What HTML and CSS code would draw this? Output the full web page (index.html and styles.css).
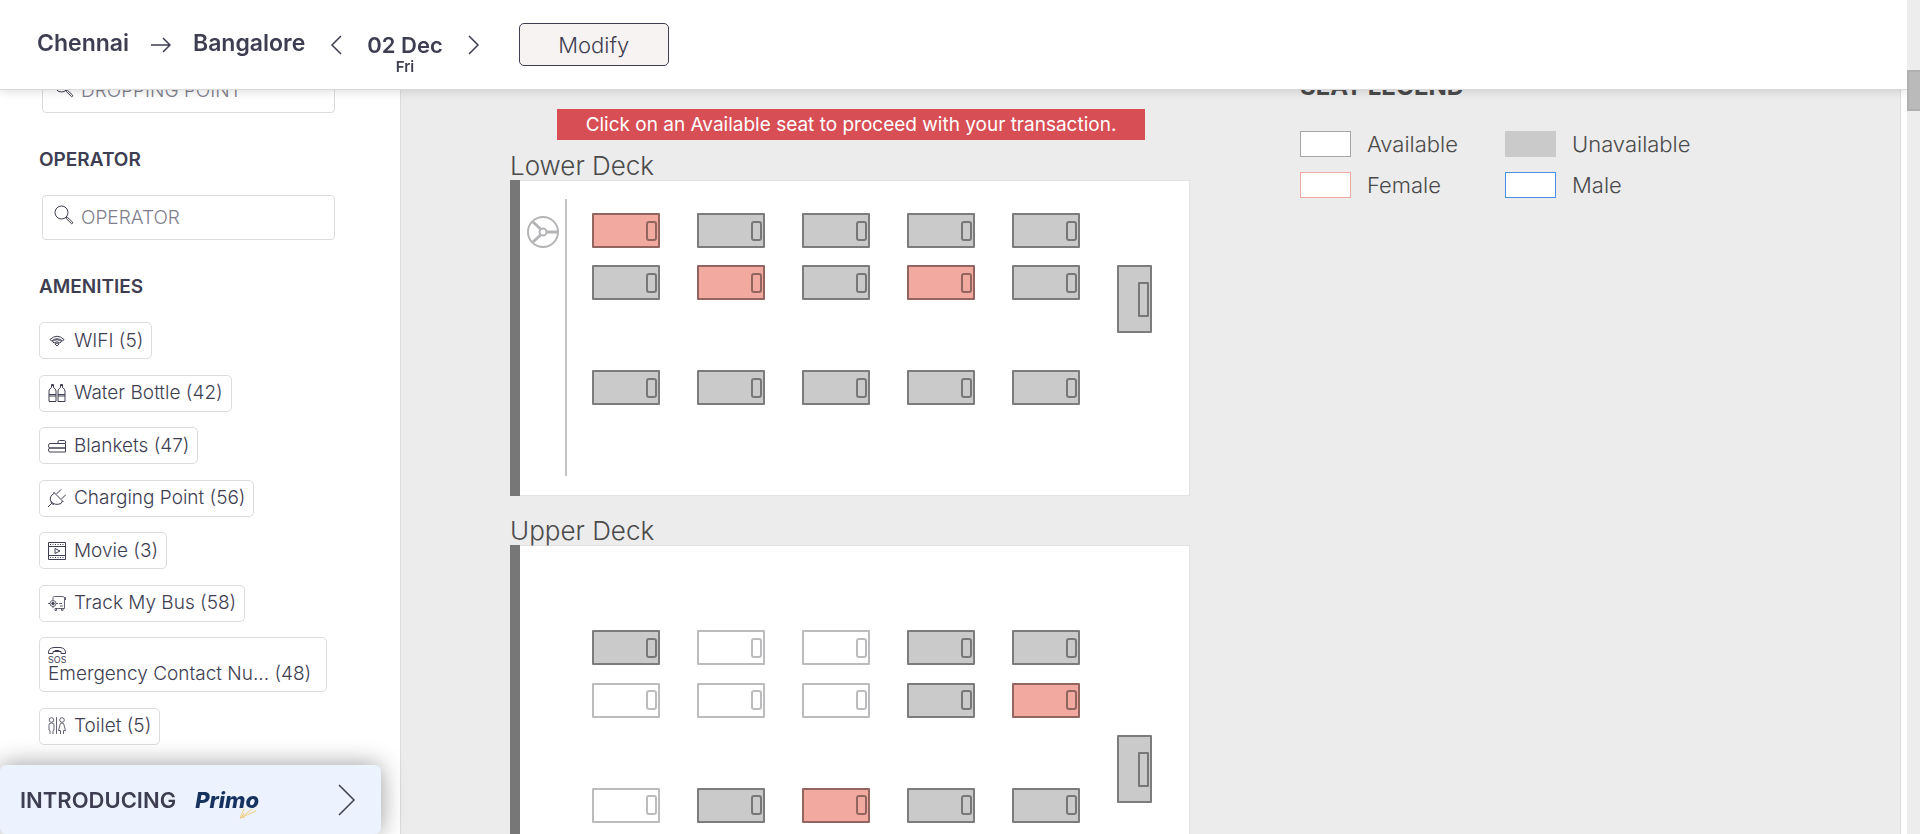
FILE: index.html
```html
<!DOCTYPE html>
<html lang="en">
<head>
<meta charset="utf-8">
<title>Chennai to Bangalore bus seats</title>
<link rel="stylesheet" href="styles.css">
</head>
<body>
<header class="topbar">
  <span class="city">Chennai</span>
  <svg class="route-arrow" viewBox="0 0 20 16" aria-hidden="true"><path d="M0 8H19M12 1L19 8L12 15"/></svg>
  <span class="city">Bangalore</span>
  <button class="day-step" aria-label="Previous day"><svg viewBox="0 0 12 20"><path d="M11 1L2 10L11 19"/></svg></button>
  <div class="date"><span class="date-day">02 Dec</span><span class="date-week">Fri</span></div>
  <button class="day-step" aria-label="Next day"><svg viewBox="0 0 12 20"><path d="M1 1L10 10L1 19"/></svg></button>
  <button class="modify">Modify</button>
</header>

<div class="page">
  <aside class="filters">
    <label class="search">
      <svg viewBox="0 0 20 20" aria-hidden="true"><circle cx="7.500" cy="7.500" r="6.500"/><path d="M12 13.200L13.200 12L18.600 17.200Q19 18.600 17.600 18.700Z"/></svg>
      <input type="text" placeholder="DROPPING POINT" aria-label="Dropping point">
    </label>
    <h2 class="filter-title">OPERATOR</h2>
    <label class="search">
      <svg viewBox="0 0 20 20" aria-hidden="true"><circle cx="7.500" cy="7.500" r="6.500"/><path d="M12 13.200L13.200 12L18.600 17.200Q19 18.600 17.600 18.700Z"/></svg>
      <input type="text" placeholder="OPERATOR" aria-label="Operator">
    </label>
    <h2 class="filter-title">AMENITIES</h2>
    <div class="chips">
      <button class="chip"><svg viewBox="0 0 18 18"><path d="M2 7.500Q9 1 16 7.500L14.500 9Q9 4.500 3.500 9ZM4.500 9.500Q9 6 13.500 9.500L12 11Q9 8.500 6 11ZM7 12Q9 10 11 12L9 14Z"/></svg>WIFI (5)</button>
      <button class="chip"><svg viewBox="0 0 18 18"><path d="M3.500 .5H5.500V3.500Q8 5 8 7V17.500H1V7Q1 5 3.500 3.500ZM12.500 .5H14.500V3.500Q17 5 17 7V17.500H10V7Q10 5 12.500 3.500ZM1 10.500H8M1 12H8M10 10.500H17M10 12H17M3.500 1.500H5.500M12.500 1.500H14.500"/></svg>Water Bottle (42)</button>
      <button class="chip"><svg viewBox="0 0 18 18"><path d="M10 6.500V5Q10 3.500 11.500 3.500H16.500Q17.500 3.500 17.500 5V6.500M2 6.500H17.500V11H2Q.5 11 .5 8.800T2 6.500ZM2 11H17.500V15H2Q.5 15 .5 13T2 11Z"/></svg>Blankets (47)</button>
      <button class="chip"><svg viewBox="0 0 18 18"><path d="M5.500 3L15.500 13M8.500 5L13 .5M13.500 10L18 5.500M6.500 4Q.5 7.500 3 12.500Q7 17 13 14.500L14.500 12M3.500 14.500L0 18M3 12.500L3.500 14.500L6 15.500"/></svg>Charging Point (56)</button>
      <button class="chip"><svg viewBox="0 0 18 18"><path d="M.5 .5H17.500V17.500H.5ZM.5 4.500H17.500M.5 13.500H17.500M7 6.500V11.500L12 9Z"/><path stroke-dasharray="1 1.500" d="M2 2.500H17M2 15.500H17"/></svg>Movie (3)</button>
      <button class="chip"><svg class="fine" viewBox="0 0 18 18"><path d="M5 5V3.500Q5 2.500 6.500 2.500H15L16.500 3.500V14.500H7M16.500 3.500H17.500V6M11 9.500H14M12 12H15M7 14.500V16.500H8.500V14.500M13.500 14.500V16.500H15V14.500M0 9.500H2M8 9.500H10M5 5V6.500M5 12.500V14"/><circle cx="5" cy="9.500" r="3"/><circle class="solid" cx="5" cy="9.500" r="1.300"/></svg>Track My Bus (58)</button>
      <button class="chip chip-stacked"><svg viewBox="0 0 18 18"><path d="M.5 7.500Q0 2 6 1.500H12Q18 2 17.500 7.500H13V5.500H5V7.500ZM7 5.500V4.500H11V5.500"/><text x="0" y="17">SOS</text></svg>Emergency Contact Nu... (48)</button>
      <button class="chip"><svg class="fine" viewBox="0 0 18 18"><path d="M1 8Q1 6 3.500 6T6 8V13L5 13.500V17M1 8V13L2 13.500V17M8.500 0V17M14 6Q16 6 16 8L17.500 13.500H15.500V17M14 6Q12 6 12 8L10.500 13.500H12.500V17"/><circle cx="3.500" cy="3" r="2.300"/><circle cx="14" cy="3" r="2.300"/></svg>Toilet (5)</button>
    </div>
  </aside>

  <main class="seats">
    <div class="decks">
      <p class="notice">Click on an Available seat to proceed with your transaction.</p>
      <h3 class="deck-title">Lower Deck</h3>
      <section class="deck">
        <div class="cabin">
          <svg class="wheel" viewBox="0 0 32 32" aria-hidden="true"><circle cx="16" cy="16" r="15"/><circle cx="16" cy="16" r="3.500"/><path d="M19.500 16H30M13.500 13L6 6M13.500 19L6 26"/></svg>
        </div>
        <div class="grid" id="lower"></div>
      </section>
      <h3 class="deck-title">Upper Deck</h3>
      <section class="deck">
        <div class="cabin cabin-empty"></div>
        <div class="grid" id="upper"></div>
      </section>
    </div>
    <section class="legend">
      <h3 class="legend-title">SEAT LEGEND</h3>
      <ul class="legend-list">
        <li><i class="swatch"></i>Available</li>
        <li><i class="swatch swatch-taken"></i>Unavailable</li>
        <li><i class="swatch swatch-female"></i>Female</li>
        <li><i class="swatch swatch-male"></i>Male</li>
      </ul>
    </section>
  </main>
</div>

<a class="primo" href="#primo">
  <span>INTRODUCING</span>
  <span class="primo-logo">Primo<svg viewBox="0 0 18 12" aria-hidden="true"><path d="M5 1L1 10L17 3M5 5L3 9L13 1M1 10L6 9"/></svg></span>
  <svg class="primo-go" viewBox="0 0 18 32" aria-hidden="true"><path d="M1 1L16 16L1 31"/></svg>
</a>
<div class="scrollbar" aria-hidden="true"><div class="thumb"></div></div>
<script src="seats.js"></script>
</body>
</html>
```
FILE: styles.css
```css
*, *::before, *::after { box-sizing: border-box; }
body {
  margin: 0;
  height: 100vh;
  overflow: hidden;
  background: #fff;
  color: #3e3e52;
  font-family: Inter, "Open Sans", sans-serif;
  font-size: 19px;
}
h2, h3, p, ul { margin: 0; padding: 0; }
button { font: inherit; color: inherit; background: none; border: 0; padding: 0; }
svg { fill: none; stroke: #3e3e52; flex: none; }

.topbar {
  position: fixed;
  inset: 0 13px auto 0;
  z-index: 2;
  height: 89px;
  display: flex;
  align-items: flex-start;
  padding: 23px 37px 0;
  background: #fff;
  box-shadow: 0 1px 0 #dadada, 0 2px 10px rgba(0, 0, 0, .15);
}
.city { font-size: 23px; font-weight: 600; line-height: 40px; }
.route-arrow { width: 20px; height: 16px; margin: 14px 22px 0; stroke-width: 1.500; }
.day-step { width: 12px; height: 20px; margin: 12px 25px 0; }
.day-step svg { display: block; width: 12px; height: 20px; stroke-width: 1.500; }
.date { display: flex; flex-direction: column; align-items: center; font-weight: 600; }
.date-day { font-size: 22px; line-height: 24px; margin-top: 10px; }
.date-week { font-size: 15px; line-height: 20px; }
.modify {
  width: 150px;
  height: 43px;
  margin-left: 14px;
  border: 1px solid #3e3e52;
  border-radius: 5px;
  background: #f7f3f3;
  font-size: 22px;
  font-weight: 300;
}

.page { display: flex; height: 100vh; padding-right: 13px; overflow: hidden; }
.filters { flex: none; width: 401px; padding: 68px 65px 0 39px; border-right: 1px solid #dcdcdc; }
.search {
  display: flex;
  gap: 7px;
  height: 45px;
  margin-left: 3px;
  padding-left: 11px;
  border: 1px solid #dcdcdc;
  border-radius: 4px;
}
.search svg { width: 20px; height: 20px; margin-top: 9px; }
.search input {
  flex: 1;
  min-width: 0;
  padding: 0;
  border: 0;
  outline: 0;
  background: none;
  font: 300 19px Inter, sans-serif;
  color: #3e3e52;
}
.search input::placeholder { color: #7e7e8c; opacity: 1; }
.filter-title { margin: 36px 0 24px; font-size: 19px; font-weight: 600; line-height: 22px; }
.chips {
  display: flex;
  flex-direction: column;
  align-items: flex-start;
  justify-content: space-between;
  min-height: 423px;
}
.chip {
  display: flex;
  align-items: center;
  gap: 8px;
  min-height: 37px;
  padding: 0 8px;
  border: 1px solid #dcdcdc;
  border-radius: 5px;
  font-weight: 300;
  line-height: 20px;
}
.chip svg { width: 18px; height: 18px; stroke-width: 1; }
.chip .fine { stroke-width: .8; }
.chip svg text { font: 400 9px Inter, sans-serif; fill: #3e3e52; stroke: none; }
.chip .solid { fill: #3e3e52; }
.chip-stacked {
  flex-direction: column;
  align-items: flex-start;
  gap: 0;
  padding: 8px 15px 7px 8px;
}

.seats {
  flex: 1;
  display: flex;
  align-items: flex-start;
  gap: 110px;
  margin-right: 6px;
  padding: 74px 0 0 109px;
  border-right: 1px solid #dcdcdc;
  background: #ececec;
  color: #4a4a4a;
}
.decks { width: 680px; padding-top: 35px; }
.notice {
  margin: 0 45px 12px 47px;
  background: #d84e55;
  color: #fff;
  font-weight: 400;
  line-height: 31px;
  text-align: center;
}
.deck-title { font-size: 26px; font-weight: 300; line-height: 28px; }
.deck {
  display: flex;
  height: 316px;
  margin-bottom: 21px;
  border: 1px solid #e2e2e2;
  border-left: 0;
  background: #fff;
}
.deck::before { content: ""; width: 10px; margin: -1px 0; background: #777; }
.cabin { width: 47px; margin: 18px 25px 19px 0; padding: 17px 0 0 7px; border-right: 2px solid #c4c4c6; }
.cabin-empty { border-color: transparent; }
.wheel { display: block; width: 32px; height: 32px; stroke: #b4b4b7; stroke-width: 2; }
.wheel path { stroke-width: 3; }
.grid {
  display: grid;
  grid-template-columns: repeat(5, 105px) 35px;
  grid-template-rows: repeat(5, 1fr);
  padding: 32px 0 20px;
}
.seat {
  display: flex;
  align-items: center;
  justify-content: flex-end;
  width: 68px;
  height: 35px;
  padding-right: 1px;
  border: 2px solid #bcbcbf;
  border-radius: 1px;
  background: #fff;
}
.seat::after { content: ""; width: 11px; height: 20px; border: 2px solid #bcbcbf; border-radius: 3px; }
.seat-taken, .seat-female { border-color: #7c7c7c; }
.seat-taken::after, .seat-female::after { border-color: #777; }
.seat-taken { background: #cacaca; }
.seat-female { background: #f2a9a0; border-color: #93655f; }
.seat-female::after { border-color: #93655f; }
.seat-end { width: 35px; height: 68px; }
.seat-end::after { height: 35px; border-radius: 1px; }

.legend-title { font-size: 24px; font-weight: 700; line-height: 26px; }
.legend-list {
  display: grid;
  grid-template-columns: 205px 205px;
  row-gap: 15px;
  margin-top: 31px;
  list-style: none;
  font-size: 22px;
  font-weight: 300;
}
.legend-list li { display: flex; align-items: center; gap: 16px; line-height: 26px; }
.swatch { width: 51px; height: 26px; border: 1px solid #a5a5a5; background: #fff; }
.swatch-taken { border-color: #cacaca; background: #cacaca; }
.swatch-female { border-color: #f2a9a0; }
.swatch-male { border-color: #4a90e2; }

.primo {
  position: fixed;
  left: 0;
  bottom: 0;
  z-index: 3;
  display: flex;
  align-items: center;
  width: 381px;
  height: 69px;
  padding: 0 25px 0 20px;
  border-radius: 6px;
  background: #ecf3ff;
  box-shadow: 0 0 24px rgba(0, 0, 0, .4);
  color: #3e3e52;
  font-size: 22px;
  font-weight: 600;
  text-decoration: none;
}
.primo-logo { position: relative; margin-left: 19px; color: #16325f; font-weight: 800; font-style: italic; }
.primo-logo svg { position: absolute; right: 2px; top: 100%; width: 18px; height: 12px; margin-top: -5px; stroke: #f0cd80; }
.primo-go { width: 18px; height: 32px; margin-left: auto; stroke-width: 1.500; }

.scrollbar { position: fixed; inset: 0 0 0 auto; z-index: 4; width: 13px; padding-top: 70px; background: #ededed; }
.thumb { height: 41px; border: 2px solid #b0b0b0; border-right: 0; background: #bababa; }
```
FILE: seats.js
```js
// f = female, x = unavailable, o = available, . = no seat, E = seat across the back
const decks = {
  lower: ["fxxxx.", "xfxfxE", "......", "xxxxx.", "......"],
  upper: ["......", "xooxx.", "oooxf.", ".....E", "oxfxx."]
};
const names = { f: "seat-female", x: "seat-taken", o: "seat-open", E: "seat-taken seat-end" };

for (const [id, rows] of Object.entries(decks)) {
  const grid = document.getElementById(id);
  rows.forEach((row, r) => {
    [...row].forEach((kind, c) => {
      if (kind === ".") return;
      const seat = document.createElement("button");
      seat.className = "seat " + names[kind];
      seat.setAttribute("aria-label", `${id} deck, row ${r + 1}, seat ${c + 1}`);
      seat.style.gridArea = kind === "E" ? `${r + 1} / ${c + 1} / span 2` : `${r + 1} / ${c + 1}`;
      grid.append(seat);
    });
  });
}
```
